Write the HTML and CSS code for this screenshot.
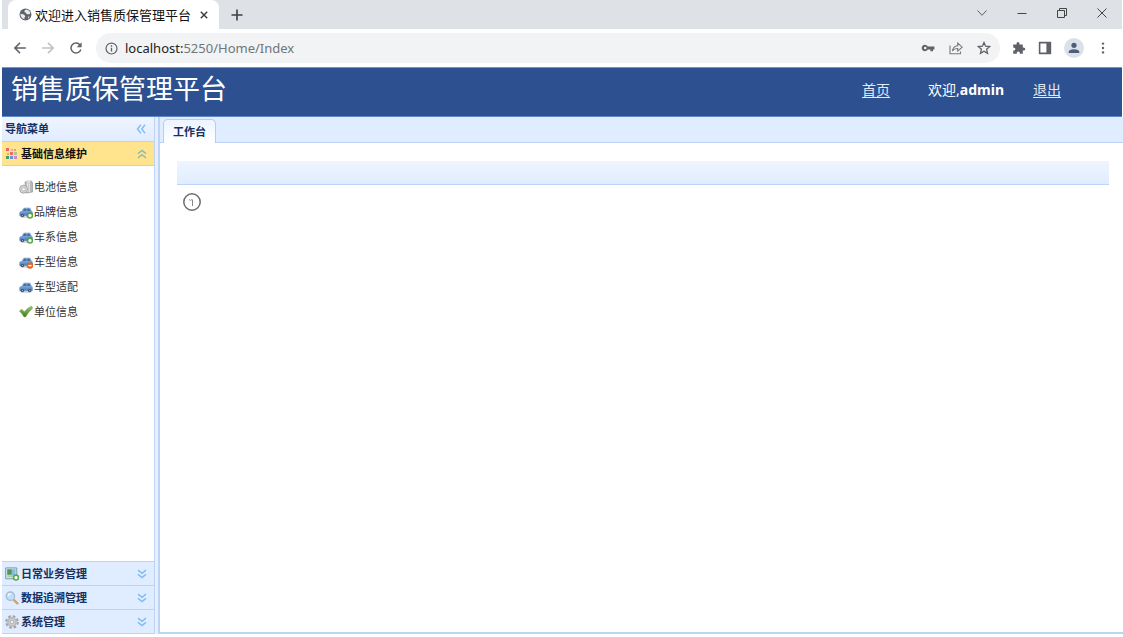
FILE: index.html
```html
<!DOCTYPE html>
<html lang="zh-CN">
<head>
<meta charset="utf-8">
<title>欢迎进入销售质保管理平台</title>
<link rel="stylesheet" href="styles.css">
</head>
<body>
<svg class="defs" aria-hidden="true">
  <defs>
    <linearGradient id="carBlue" x1="0" y1="0" x2="0" y2="1"><stop offset="0" stop-color="#a6cbf0"/><stop offset="1" stop-color="#4479ba"/></linearGradient>
    <linearGradient id="leaf" x1="0" y1="0" x2="0" y2="1"><stop offset="0" stop-color="#9cc878"/><stop offset="1" stop-color="#3f7a1c"/></linearGradient>
    <symbol id="car" viewBox="0 0 14 14">
      <ellipse cx="7" cy="11.6" rx="6.5" ry="1.2" fill="#c9ced6"/>
      <path d="M.4 10.5V7.6Q.6 6.3 2.7 5.9L4.2 3.1Q4.6 2.4 5.5 2.4H10.4Q11.3 2.4 11.7 3.2L12.6 5.7Q13.7 6.3 13.7 7.6V10.3Q13.6 10.8 13 10.8H1Q.5 10.8.4 10.5Z" fill="url(#carBlue)"/>
      <path d="M3.8 6 5.2 3.6H7.5V6ZM8.2 3.6H10.5L11.6 6H8.2Z" fill="#4a6f9e"/>
      <circle cx="3.4" cy="10.6" r="1.7" fill="#454f5c"/><circle cx="10.6" cy="10.6" r="1.7" fill="#454f5c"/>
      <circle cx="3.4" cy="10.6" r=".6" fill="#b9c0c8"/><circle cx="10.6" cy="10.6" r=".6" fill="#b9c0c8"/>
    </symbol>
    <symbol id="down" viewBox="0 0 10 10"><path d="M1 1.2 5 4.4 9 1.2M1 5.4 5 8.6 9 5.4" fill="none" stroke="#7fbdf2" stroke-width="1.5"/></symbol>
    <symbol id="up" viewBox="0 0 10 10"><path d="M1 4.6 5 1.4 9 4.6M1 8.8 5 5.6 9 8.8" fill="none" stroke="#8fbcae" stroke-width="1.5"/></symbol>
    <symbol id="plus" viewBox="0 0 14 14"><circle cx="11" cy="10.6" r="3" fill="#58ab45" stroke="#3f8a2f" stroke-width=".4"/><path d="M11 9V12.2M9.4 10.6H12.6" stroke="#fff" stroke-width="1.6"/></symbol>
  </defs>
</svg>
<div class="window">
  <div class="tabstrip">
    <div class="browser-tab">
      <svg class="i13" viewBox="0 0 14 14"><circle cx="7" cy="7" r="6.4" fill="#5f6368"/><path d="M7.6 1.5Q5.5 2.4 5.8 4.2L7.5 5.2 8.4 6.8H11.2L12.3 5.5Q11.8 2.4 7.6 1.5ZM1.6 6.3 5.3 6.9 6.9 8.9 5.8 10.4 5.9 12.2Q1.5 11 1.6 6.3ZM9.6 9.4 11.6 9.2 9.8 11.5Z" fill="#e8eaed"/></svg>
      <span class="browser-title">欢迎进入销售质保管理平台</span>
      <button class="plain" aria-label="关闭标签页"><svg class="i8" viewBox="0 0 8 8"><path d="M.8.8 7.2 7.2M7.2.8.8 7.2" stroke="#3c4043" stroke-width="1.5"/></svg></button>
    </div>
    <button class="plain new-tab" aria-label="新标签页"><svg class="i12" viewBox="0 0 12 12"><path d="M6 .5V11.5M.5 6H11.5" stroke="#3c4043" stroke-width="1.6"/></svg></button>
    <div class="window-buttons">
      <button class="plain" aria-label="搜索标签页"><svg class="i12" viewBox="0 0 12 12"><path d="M1.5 3.5 6 8.3 10.5 3.5" fill="none" stroke="#5f6368"/></svg></button>
      <button class="plain" aria-label="最小化"><svg class="i12" viewBox="0 0 12 12"><path d="M1.5 6.5H10.5" stroke="#444"/></svg></button>
      <button class="plain" aria-label="还原"><svg class="i12" viewBox="0 0 12 12"><path d="M1.5 3.5H8.5V10.5H1.5ZM3.5 3.5V1.5H10.5V8.5H8.5" fill="none" stroke="#444"/></svg></button>
      <button class="plain" aria-label="关闭"><svg class="i12" viewBox="0 0 12 12"><path d="M1.5 1.5 10.5 10.5M10.5 1.5 1.5 10.5" stroke="#444"/></svg></button>
    </div>
  </div>
  <div class="toolbar">
    <div class="nav-buttons">
      <button class="plain" aria-label="后退"><svg class="i12" viewBox="0 0 12 12"><path d="M11.8 6H1M6 .9.9 6 6 11.1" fill="none" stroke="#5f6368" stroke-width="1.5"/></svg></button>
      <button class="plain" aria-label="前进"><svg class="i12" viewBox="0 0 12 12"><path d="M.2 6H11M6 .9 11.1 6 6 11.1" fill="none" stroke="#bdc1c6" stroke-width="1.5"/></svg></button>
      <button class="plain" aria-label="重新加载"><svg class="i12" viewBox="0 0 12 12"><path d="M10 3A5 5 0 1 0 10.8 7.5" fill="none" stroke="#5f6368" stroke-width="1.5"/><path d="M11.6.3V5.2H6.7Z" fill="#5f6368"/></svg></button>
    </div>
    <div class="address">
      <svg class="i13" viewBox="0 0 14 14"><circle cx="7" cy="7" r="5.9" fill="none" stroke="#5f6368" stroke-width="1.3"/><path d="M7 6.2V10.2M7 3.6V5" stroke="#5f6368" stroke-width="1.4"/></svg>
      <span class="url"><span class="host">localhost:</span>5250/Home/Index</span>
      <div class="address-actions">
        <button class="plain" aria-label="密码"><svg class="i14" viewBox="0 0 14 14"><path d="M6.8 5.6A3.2 3.2 0 1 0 6.8 8.4H9.4V10.2H12V8.4H13.4V5.6ZM4.2 8.3A1.3 1.3 0 1 1 4.2 5.7 1.3 1.3 0 0 1 4.2 8.3Z" fill="#5f6368"/></svg></button>
        <button class="plain" aria-label="分享"><svg class="i14" viewBox="0 0 14 14"><path d="M1 4.5V12.7H11.5V10.5M3.4 10Q4 5.3 8.7 4.8V2.1L13.2 6.2 8.7 10.1V7.5Q5.2 7.3 3.4 10Z" fill="none" stroke="#777b80" stroke-width="1.1"/></svg></button>
        <button class="plain" aria-label="收藏"><svg class="i14" viewBox="0 0 14 14"><path d="M7 1.5 8.6 5.2 12.7 5.6 9.6 8.3 10.5 12.3 7 10.2 3.5 12.3 4.4 8.3 1.3 5.6 5.4 5.2Z" fill="none" stroke="#5f6368" stroke-width="1.3"/></svg></button>
      </div>
    </div>
    <div class="browser-actions">
      <button class="plain" aria-label="扩展程序"><svg class="i14" viewBox="0 0 14 14"><path d="M1.2 3.6H4.6Q4.2 1 6 1T7.4 3.6H10.8V6.5Q13.3 6.2 13.3 8T10.8 9.5V12.8H7.9Q8 10.5 6.3 10.5T4.7 12.8H1.2V9.6Q3.4 9.7 3.4 8.1T1.2 6.5Z" fill="#5f6368"/></svg></button>
      <button class="plain" aria-label="侧边栏"><svg class="i14" viewBox="0 0 14 14"><path d="M1.6 1.6H12.4V12.4H1.6Z" fill="none" stroke="#5f6368" stroke-width="1.6"/><path d="M8.4 1.6H12.6V12.4H8.4Z" fill="#5f6368"/></svg></button>
      <button class="plain avatar" aria-label="用户"><svg class="i14" viewBox="0 0 14 14"><circle cx="7" cy="4.3" r="2.6" fill="#4f5d78"/><path d="M1.7 12V10.7Q2 8.2 7 8.2T12.3 10.7V12Z" fill="#4f5d78"/></svg></button>
      <button class="plain" aria-label="更多"><svg class="i14" viewBox="0 0 14 14"><circle cx="7" cy="2.6" r="1.2" fill="#5f6368"/><circle cx="7" cy="7" r="1.2" fill="#5f6368"/><circle cx="7" cy="11.4" r="1.2" fill="#5f6368"/></svg></button>
    </div>
  </div>

  <header class="banner">
    <h1 class="banner-title">销售质保管理平台</h1>
    <nav class="banner-links">
      <a href="#">首页</a>
      <span class="welcome">欢迎,<b>admin</b></span>
      <a href="#">退出</a>
    </nav>
  </header>

  <div class="workspace">
    <aside class="sidebar">
      <div class="panel-head">
        <span>导航菜单</span>
        <button class="plain" aria-label="收起菜单"><svg class="i10" viewBox="0 0 10 10"><path d="M4.8.8 1.5 5 4.8 9.2M9 .8 5.7 5 9 9.2" fill="none" stroke="#7fbdf2" stroke-width="1.4"/></svg></button>
      </div>
      <button class="fold open">
        <svg class="i14" viewBox="0 0 14 14"><path d="M1 1H4V4H1Z" fill="#ee6266"/><path d="M6 2H8V4H6Z" fill="#f4a0a0"/><path d="M9 2H11V4H9Z" fill="#f29a78"/><path d="M2 6H4V8H2Z" fill="#f2a862"/><path d="M5 5H8V8H5Z" fill="#ef6a6a"/><path d="M9 5H12V8H9Z" fill="#a9c987"/><path d="M1 9H4V12H1Z" fill="#4b9a62"/><path d="M5 9H8V12H5Z" fill="#5f9ad2"/><path d="M9 9H12V12H9Z" fill="#cf86c2"/></svg>
        <span>基础信息维护</span>
        <svg class="i10 arrow"><use href="#up"/></svg>
      </button>
      <ul class="menu">
        <li><a href="#"><svg class="i14" viewBox="0 0 14 14"><path d="M6 2 12.5 1.2 13.5 3V12L7 13Z" fill="#b9b9b9" stroke="#969696" stroke-width=".7"/><path d="M8.5 3V12M10.3 3V12" stroke="#ededed" stroke-width="1.1"/><path d="M6 2Q9-.2 12.5 1.2L10 3.2Z" fill="#eee" stroke="#aaa" stroke-width=".5"/><circle cx="4.6" cy="9.2" r="4" fill="#d6d6d6" stroke="#9b9b9b" stroke-width=".8"/><circle cx="4.6" cy="9.2" r="1.8" fill="#f5f5f5" stroke="#aaa" stroke-width=".7"/></svg>电池信息</a></li>
        <li><a href="#"><svg class="i14" viewBox="0 0 14 14"><use href="#car"/><use href="#plus"/></svg>品牌信息</a></li>
        <li><a href="#"><svg class="i14" viewBox="0 0 14 14"><use href="#car"/><use href="#plus"/></svg>车系信息</a></li>
        <li><a href="#"><svg class="i14" viewBox="0 0 14 14"><use href="#car"/><circle cx="11" cy="10.6" r="3" fill="#ee6a20" stroke="#cf4d0c" stroke-width=".4"/><path d="M9.4 10.6H12.6" stroke="#fff" stroke-width="1.3"/></svg>车型信息</a></li>
        <li><a href="#"><svg class="i14"><use href="#car"/></svg>车型适配</a></li>
        <li><a href="#"><svg class="i14" viewBox="0 0 14 14"><path d="M.4 6 2.7 4.2Q4 5 5.2 6.7 8.5 2.6 12.6 1L13.7 3.2Q9.6 6.7 6.5 12H5Q3 8.6.4 6Z" fill="url(#leaf)" stroke="#6b9f4b" stroke-width=".4"/></svg>单位信息</a></li>
      </ul>
      <button class="fold">
        <svg class="i14" viewBox="0 0 14 14"><path d="M.7.9H11.8V11.8H.7Z" fill="#d4e5e8" stroke="#7193a8" stroke-width=".9"/><path d="M2.2 2.3H6.8V7.8H2.2Z" fill="#4b9a50"/><path d="M7 2.3H10.5V8.3H7Z" fill="#86bbdf"/><path d="M2.2 8.3H9.8V10.2H2.2Z" fill="#a9cbb0"/><use href="#plus"/></svg>
        <span>日常业务管理</span>
        <svg class="i10 arrow"><use href="#down"/></svg>
      </button>
      <button class="fold">
        <svg class="i14" viewBox="0 0 14 14"><path d="M8.8 8.8 12.4 12.3" stroke="#dfa05e" stroke-width="2.4" stroke-linecap="round"/><circle cx="5.4" cy="5.2" r="4.2" fill="#bfe0fb" stroke="#a9bccf" stroke-width="1.3"/><path d="M3 4.8Q3.5 2.8 5.7 2.7" fill="none" stroke="#fff" stroke-width="1.2"/></svg>
        <span>数据追溯管理</span>
        <svg class="i10 arrow"><use href="#down"/></svg>
      </button>
      <button class="fold">
        <svg class="i14" viewBox="0 0 14 14"><circle cx="7" cy="7" r="5.7" fill="none" stroke="#a2a2a2" stroke-width="2.2" stroke-dasharray="2.6 1.88"/><circle cx="7" cy="7" r="4" fill="#dcdcdc" stroke="#bcbcbc" stroke-width="2.2"/><circle cx="7" cy="7" r="1.9" fill="#eef3fb" stroke="#9b9b9b" stroke-width=".8"/></svg>
        <span>系统管理</span>
        <svg class="i10 arrow"><use href="#down"/></svg>
      </button>
    </aside>
    <main class="content">
      <div class="tabs"><button class="tab">工作台</button></div>
      <div class="tab-body">
        <div class="panel-bar"></div>
        <svg class="clock" viewBox="0 0 20 20"><circle cx="10" cy="10" r="8.2" fill="none" stroke="#6c6c6c" stroke-width="1.5"/><path d="M7 7.5 8.6 8.5M9 7.8H10.5V14" fill="none" stroke="#888" stroke-width="1"/></svg>
      </div>
    </main>
  </div>
</div>
</body>
</html>
```

FILE: styles.css
```css
* { box-sizing: border-box; }
html, body { height: 100%; }
body {
  margin: 0;
  background: #fff;
  font-family: "Noto Sans", "Noto Sans CJK SC", sans-serif;
  font-size: 11px;
  line-height: 16px;
}
svg { display: block; flex: none; }
.defs { position: absolute; width: 0; height: 0; }
.i8 { width: 8px; height: 8px; }
.i10 { width: 10px; height: 10px; }
.i12 { width: 12px; height: 12px; }
.i13 { width: 13px; height: 13px; }
.i14 { width: 14px; height: 14px; }
.plain {
  display: flex;
  align-items: center;
  justify-content: center;
  border: 0;
  padding: 0;
  background: none;
}
.window {
  display: flex;
  flex-direction: column;
  min-height: 100%;
  padding: 0 0 3px 2px;
}

.tabstrip {
  display: flex;
  height: 29px;
  margin-right: 1px;
  padding-left: 6px;
  background: #dee1e6;
}
.browser-tab {
  display: flex;
  align-items: center;
  gap: 3px;
  width: 211px;
  padding-left: 11px;
  background: #fff;
  border-radius: 8px 8px 0 0;
}
.browser-title {
  width: 162px;
  color: #111;
  font-family: "Noto Sans CJK SC", sans-serif;
  font-size: 13px;
  white-space: nowrap;
}
.new-tab { margin-left: 12px; }
.window-buttons {
  display: flex;
  gap: 28px;
  margin-left: auto;
  padding: 0 14px 4px 0;
}

.toolbar {
  display: flex;
  align-items: center;
  height: 38px;
  margin-right: 1px;
  padding: 0 12px;
  background: #fff;
}
.nav-buttons { display: flex; gap: 16px; }
.address {
  display: flex;
  flex: 1;
  align-items: center;
  gap: 7px;
  height: 30px;
  margin: 0 12px 0 14px;
  padding: 0 9px;
  border-radius: 15px;
  background: #f1f3f4;
}
.url { color: #70757a; font-size: 13px; }
.host { color: #202124; }
.address-actions { display: flex; gap: 14px; margin-left: auto; }
.browser-actions { display: flex; align-items: center; gap: 12px; }
.avatar {
  width: 20px;
  height: 20px;
  border-radius: 50%;
  background: #dbe1ea;
}

.banner {
  display: flex;
  justify-content: space-between;
  height: 50px;
  margin-right: 1px;
  padding: 0 61px 0 9px;
  border-top: 1px solid #8793ac;
  border-bottom: 1px solid #5f86c6;
  background: #2d5090;
  color: #fff;
}
.banner-title {
  margin: 0;
  font-family: "Noto Sans CJK SC", sans-serif;
  font-size: 27px;
  font-weight: 400;
  line-height: 40px;
}
.banner-links { display: flex; font-size: 14px; line-height: 44px; }
.banner-links a { color: #e3eaf6; text-underline-offset: 2px; }
.welcome { margin: 0 29px 0 38px; }

.workspace { display: flex; flex: 1; gap: 3px; background: #e6effb; }
.sidebar {
  display: flex;
  flex-direction: column;
  width: 153px;
  border-right: 1px solid #bdd4f5;
  background: #fff;
}
.panel-head, .fold {
  display: flex;
  align-items: center;
  height: 24px;
  border: 0;
  border-bottom: 1px solid #bdd3f5;
  background: #e0ecff;
  color: #152f63;
  font: bold 11px/16px "Noto Sans", "Noto Sans CJK SC", sans-serif;
}
.panel-head {
  height: 25px;
  justify-content: space-between;
  padding: 0 8px 0 3px;
  background: linear-gradient(#eff5ff, #e0ecff);
}
.fold { gap: 2px; padding: 0 7px 0 3px; }
.fold.open { background: #ffe48d; color: #111; }
.arrow { margin-left: auto; }
.menu {
  flex: 1;
  margin: 0;
  padding: 8px 0 0 17px;
  border-bottom: 1px solid #bdd3f5;
  list-style: none;
}
.menu a {
  display: flex;
  align-items: center;
  gap: 1px;
  height: 25px;
  color: #333;
  text-decoration: none;
}

.content {
  display: flex;
  flex: 1;
  flex-direction: column;
  border: solid #bdd4f5;
  border-width: 0 0 2px 2px;
  background: #fff;
}
.tabs {
  display: flex;
  align-items: flex-end;
  height: 26px;
  padding-left: 3px;
  background: #e0ecff;
  box-shadow: inset 0 -1px #bdd3f5;
}
.tab {
  height: 24px;
  padding: 0 9px;
  border: 1px solid #b3cdf5;
  border-bottom: 0;
  border-radius: 5px 5px 0 0;
  background: linear-gradient(#edf4ff, #fff);
  color: #152f63;
  font: bold 11px/16px "Noto Sans", "Noto Sans CJK SC", sans-serif;
}
.tab-body { flex: 1; padding: 18px 14px 0 17px; }
.panel-bar {
  height: 24px;
  border-bottom: 1px solid #bdd3f5;
  background: linear-gradient(#eff5ff, #e0ecff);
}
.clock { width: 20px; height: 20px; margin: 7px 0 0 5px; }
```
